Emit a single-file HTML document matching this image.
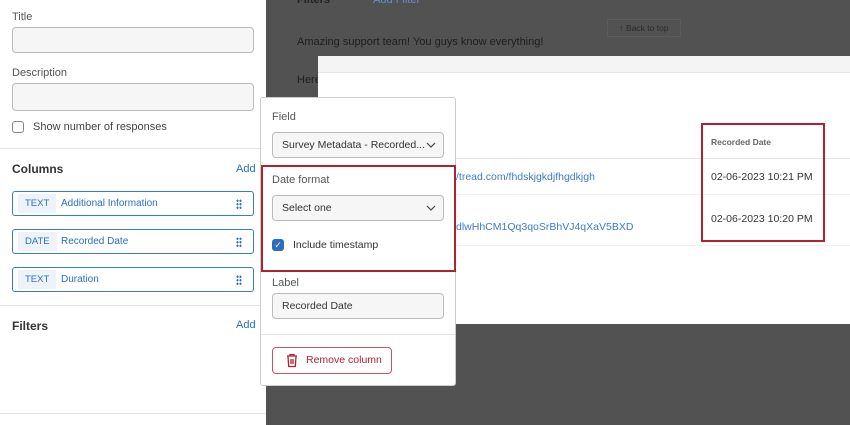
<!DOCTYPE html>
<html><head><style>
*{box-sizing:border-box;margin:0;padding:0}
body{width:850px;height:425px;overflow:hidden;position:relative;background:#525252;font-family:"Liberation Sans",sans-serif;font-size:11px;color:#333}
.a{position:absolute}
.left{left:0;top:0;width:266px;height:425px;background:#fff}
.lbl{color:#555;font-size:11px}
.inp{border:1px solid #bbb;border-radius:4px;background:#f6f6f6}
.col{left:12px;width:242px;height:25px;border:1px solid #3a7bc8;border-radius:3px;background:#fff}
.tag{position:absolute;left:5px;top:2px;height:19px;padding:0 7px;background:#eef3fa;color:#2a6ebd;font-size:9.5px;line-height:19px}
.cn{position:absolute;left:48px;top:6px;color:#2a6ebd;font-size:10px}
.dots{position:absolute;right:11px;top:7px;width:6px;height:10px;background:radial-gradient(circle,#2a6ebd 1px,transparent 1.2px) 0 0/3px 3.5px}
.hr{height:1px;background:#e6e6e6}
.blue{color:#2a6ebd}
</style></head><body>
<div class="a" style="left:297px;top:-6px;color:#222;font-size:11px;font-weight:bold">Filters <span style="color:#6a8fc0;font-weight:normal;margin-left:40px">Add Filter</span></div>
<div class="a" style="left:607px;top:19px;width:74px;height:18px;border:1px solid #5c5c5c;color:#2a2a2a;font-size:8.5px;line-height:16px;text-align:center">↑ Back to top</div>
<div class="a" style="left:297px;top:36px;color:#1e1e1e;font-size:11px">Amazing support team! You guys know everything!</div>
<div class="a" style="left:297px;top:74px;color:#1e1e1e;font-size:11px">Here</div>
<div class="a" style="left:318px;top:56px;width:532px;height:268px;background:#fff">
 <div style="height:17px;background:#f4f4f4;border-bottom:1px solid #e4e4e4"></div>
 <div class="a" style="left:0;right:0;top:102px"><div class="hr"></div></div>
 <div class="a" style="left:0;right:0;top:138px"><div class="hr" style="background:#f0f0f0"></div></div>
 <div class="a" style="left:0;right:0;top:189px"><div class="hr" style="background:#f0f0f0"></div></div>
 <div class="a" style="left:393px;top:81px;color:#666;font-size:8.5px;font-weight:bold">Recorded Date</div>
 <div class="a" style="left:138px;top:115px;color:#3a7bc8;font-size:10.5px">/tread.com/fhdskjgkdjfhgdkjgh</div>
 <div class="a" style="left:138px;top:165px;color:#3a7bc8;font-size:10.5px">dlwHhCM1Qq3qoSrBhVJ4qXaV5BXD</div>
 <div class="a" style="left:393px;top:115px;color:#333;font-size:10.5px">02-06-2023 10:21 PM</div>
 <div class="a" style="left:393px;top:157px;color:#333;font-size:10.5px">02-06-2023 10:20 PM</div>
</div>
<div class="a" style="left:701px;top:123px;width:124px;height:119px;border:2px solid #b0222f"></div>

<div class="a left">
 <div class="a lbl" style="left:12px;top:11px">Title</div>
 <div class="a inp" style="left:12px;top:27px;width:242px;height:26px"></div>
 <div class="a lbl" style="left:12px;top:67px">Description</div>
 <div class="a inp" style="left:12px;top:83px;width:242px;height:28px"></div>
 <div class="a" style="left:12px;top:121px;width:12px;height:12px;border:1px solid #888;border-radius:3px"></div>
 <div class="a" style="left:33px;top:121px;color:#444">Show number of responses</div>
 <div class="a hr" style="left:0;top:148px;width:266px"></div>
 <div class="a" style="left:12px;top:162px;font-weight:bold;font-size:12px;color:#333">Columns</div>
 <div class="a blue" style="left:236px;top:163px;font-size:11px">Add</div>
 <div class="a col" style="top:191px"><span class="tag">TEXT</span><span class="cn">Additional Information</span><span class="dots"></span></div>
 <div class="a col" style="top:229px"><span class="tag">DATE</span><span class="cn">Recorded Date</span><span class="dots"></span></div>
 <div class="a col" style="top:267px"><span class="tag">TEXT</span><span class="cn">Duration</span><span class="dots"></span></div>
 <div class="a hr" style="left:0;top:305px;width:266px"></div>
 <div class="a" style="left:12px;top:319px;font-weight:bold;font-size:12px;color:#333">Filters</div>
 <div class="a blue" style="left:236px;top:319px;font-size:11px">Add</div>
 <div class="a hr" style="left:0;top:413px;width:266px"></div>
</div>

<div class="a" style="left:260px;top:97px;width:196px;height:289px;background:#fff;border:1px solid #ccc;border-radius:3px">
 <div class="a lbl" style="left:11px;top:13px">Field</div>
 <div class="a inp" style="left:11px;top:34px;width:172px;height:26px;color:#333;padding:6px 9px;font-size:10.5px;white-space:nowrap;overflow:hidden">Survey Metadata - Recorded...</div>
 <div class="a lbl" style="left:11px;top:76px">Date format</div>
 <div class="a inp" style="left:11px;top:97px;width:172px;height:26px;color:#333;padding:6px 9px;font-size:10.5px">Select one</div>
 <div class="a" style="left:11px;top:141px;width:12px;height:12px;background:#2a6ebd;border-radius:3px;color:#fff;font-size:9px;line-height:12px;text-align:center">✓</div>
 <div class="a" style="left:32px;top:141px;color:#333;font-size:10.5px">Include timestamp</div>
 <div class="a lbl" style="left:11px;top:179px">Label</div>
 <div class="a inp" style="left:11px;top:195px;width:172px;height:26px;color:#333;padding:6px 9px;font-size:10.5px">Recorded Date</div>
 <div class="a hr" style="left:0;top:236px;width:194px"></div>
 <div class="a" style="left:11px;top:249px;width:120px;height:27px;border:1px solid #c9545e;border-radius:4px;color:#b0222f;font-size:10.5px;padding:6px 0 0 33px">Remove column</div>
 <svg class="a" style="left:25px;top:255px" width="12" height="15" viewBox="0 0 12 15"><path d="M1 3h10M4 3V1.5h4V3M2 3.5l.7 10h6.6l.7-10M5 6v5M7 6v5" fill="none" stroke="#b0222f" stroke-width="1.3"/></svg>
</div>
<svg class="a" style="left:426px;top:142px" width="10" height="6"><path d="M1 1l4 4 4-4" fill="none" stroke="#444" stroke-width="1.2"/></svg>
<svg class="a" style="left:426px;top:205px" width="10" height="6"><path d="M1 1l4 4 4-4" fill="none" stroke="#444" stroke-width="1.2"/></svg>
<div class="a" style="left:261px;top:165px;width:195px;height:107px;border:2px solid #b0222f"></div>
</body></html>
